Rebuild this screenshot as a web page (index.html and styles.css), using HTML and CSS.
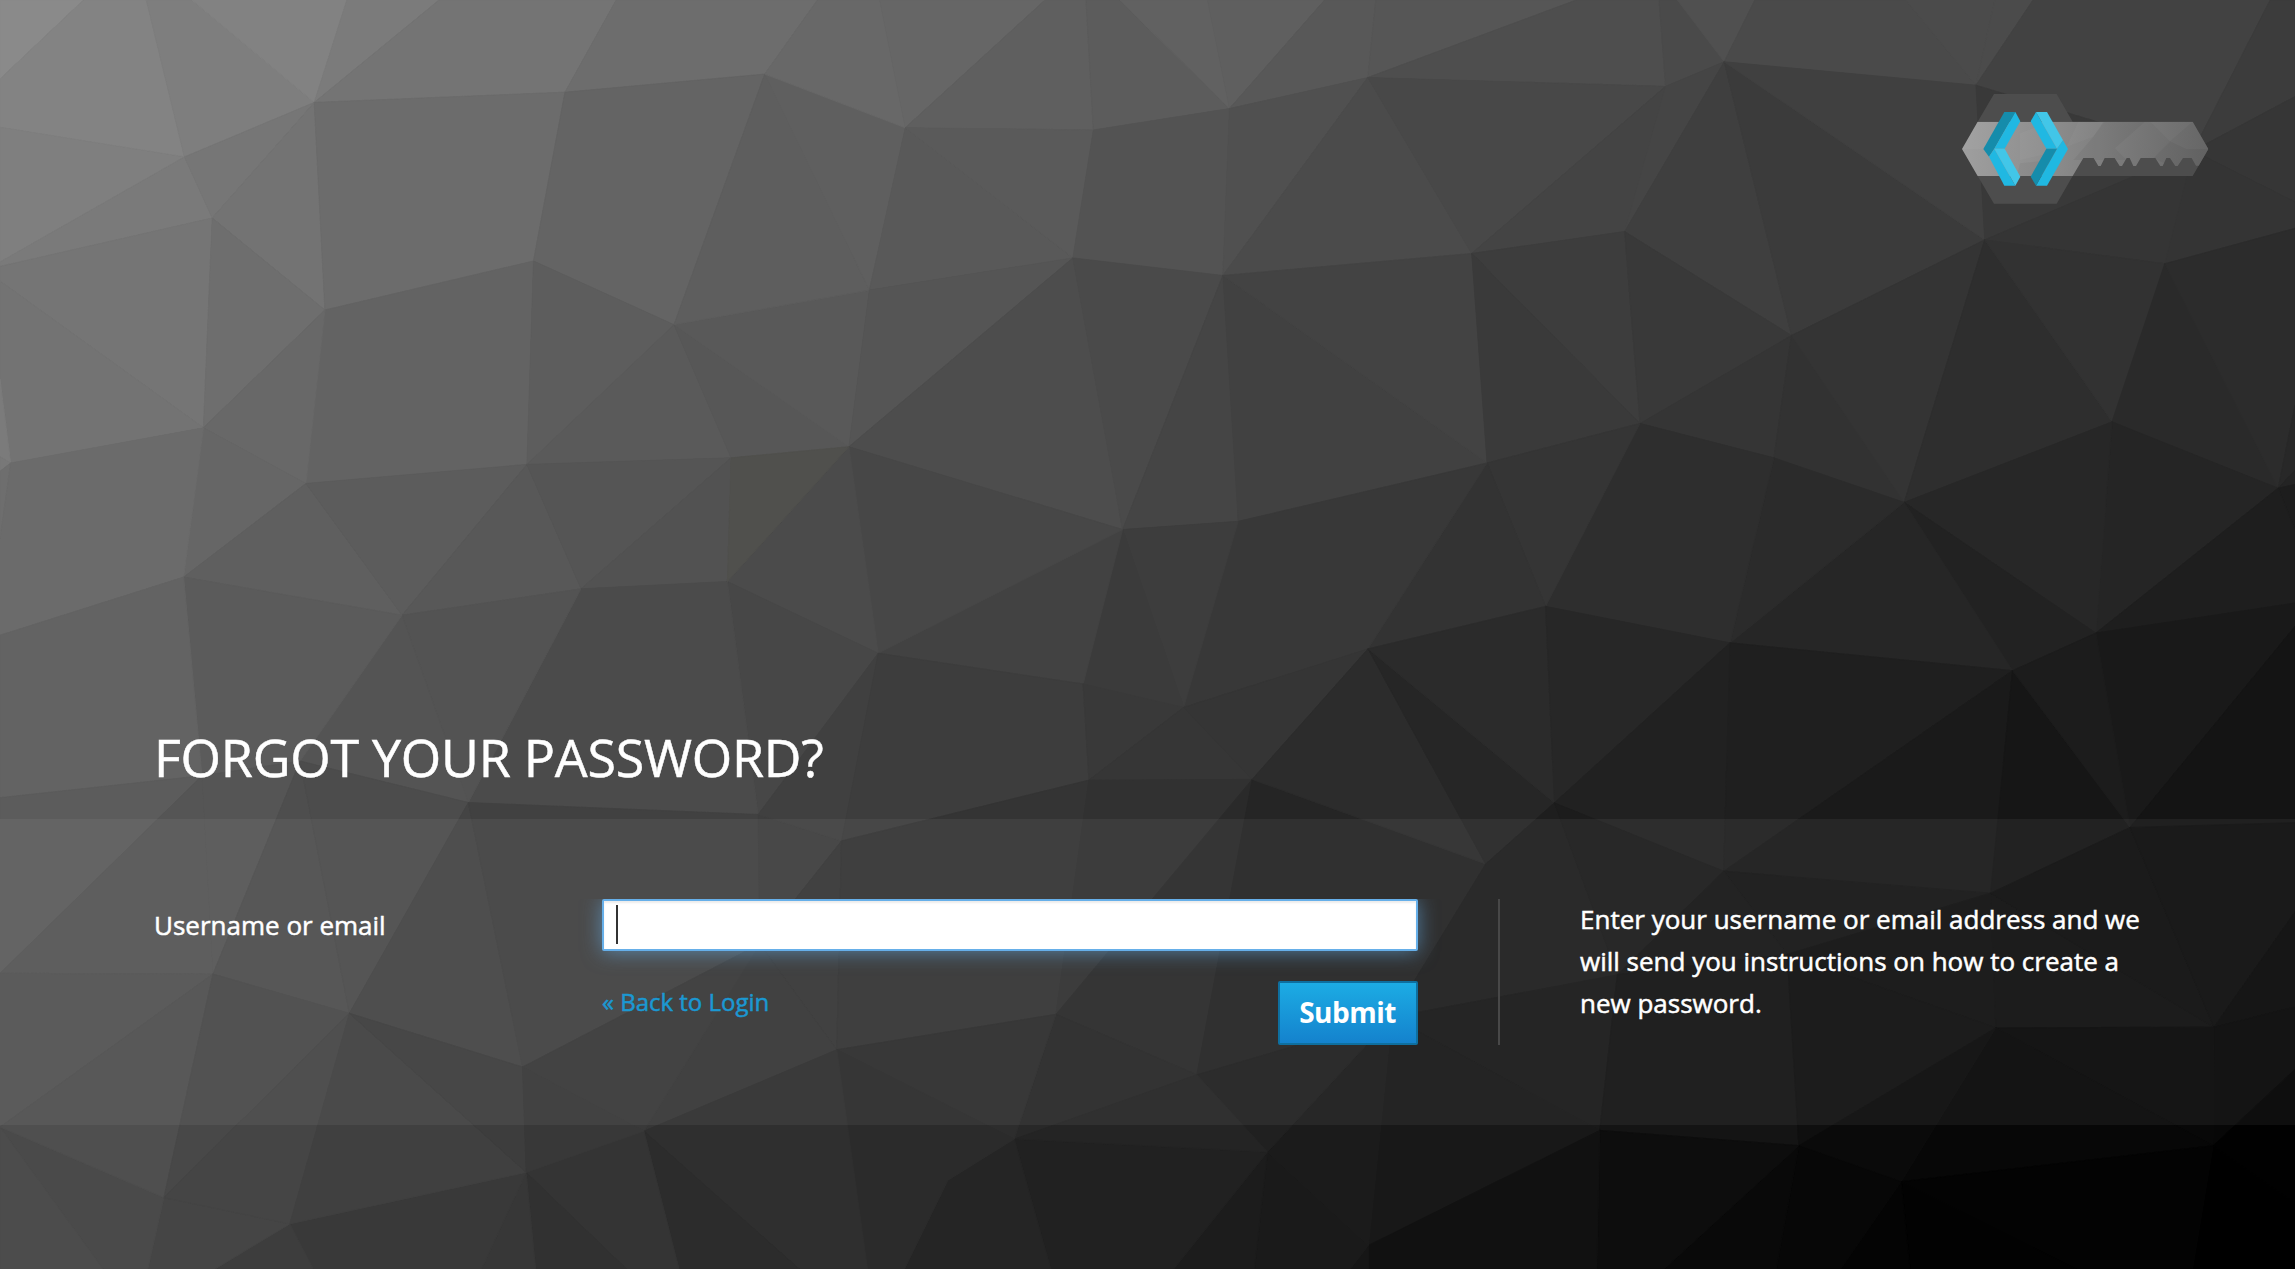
FILE: index.html
```html
<!DOCTYPE html>
<html lang="en">
<head>
<meta charset="utf-8">
<title>Forgot Your Password?</title>
<link rel="stylesheet" href="styles.css">
</head>
<body>
<svg class="backdrop" id="backdrop" viewBox="0 0 1568 867" preserveAspectRatio="none" aria-hidden="true"></svg>
<div class="page">
  <header class="brand">
    <svg class="logo" viewBox="60 36 750 342" role="img" aria-label="Keycloak">
      <path fill="#4d4d4d" d="M162 42H350L398 125H758L805 207L758 288H398L350 371H162L113 288L66 207L113 125Z"/>
      <clipPath id="blade"><path d="M113 125H758L805 207L776 257L768 257L755 234H729L713 258H706L690 234H679L668 258H661L646 234H602L588 258H580L569 234H560L546 258H539L524 234H494L482 258H475L461 234H430L398 288H113L66 207Z"/></clipPath>
      <linearGradient id="steel" x1="66" x2="805" y1="180" y2="230" gradientUnits="userSpaceOnUse"><stop offset="0" stop-color="#9f9f9f"/><stop offset=".35" stop-color="#8d8d8d"/><stop offset=".65" stop-color="#7a7a7a"/><stop offset="1" stop-color="#666"/></linearGradient>
      <g clip-path="url(#blade)">
        <path fill="url(#steel)" d="M66 120H810V290H66Z"/>
        <path fill="#fff" fill-opacity=".03" d="M66 207L113 125H170L150 207ZM240 160L330 125L380 207L240 240ZM415 125H495L460 170L380 200ZM690 184L630 125H758Z"/>
        <path fill="#000" fill-opacity=".04" d="M490 125H615L525 205L560 240H400L460 170ZM690 184L740 207L805 207L760 290L640 235ZM240 250L330 240L300 290H230Z"/>
      </g>
      <path fill="#158cab" d="M193 96H226L163 206L147 230L130 207Z"/>
      <path fill="#20b8e2" d="M226 96L241 124L194 206H163Z"/>
      <path fill="#20b8e2" d="M163 206L226 317H193L147 230Z"/>
      <path fill="#42c6e8" d="M163 206H194L241 290L226 317Z"/>
      <path fill="#20b8e2" d="M288 96L272 124L319 206H351Z"/>
      <path fill="#42c6e8" d="M288 96H321L369 181L351 206Z"/>
      <path fill="#20b8e2" d="M369 181L384 207L321 317H288L351 206Z"/>
      <path fill="#158cab" d="M319 206H351L288 317L272 290Z"/>
    </svg>
  </header>
  <h1 class="title">Forgot Your Password?</h1>
  <main class="panel">
    <form class="form">
      <label class="label" for="username">Username or email</label>
      <div class="fields">
        <div class="field"><div class="input" id="username" role="textbox" tabindex="0"><span class="caret"></span></div></div>
        <div class="actions">
          <a class="back" href="#">« Back to Login</a>
          <button class="submit" type="button">Submit</button>
        </div>
      </div>
    </form>
    <div class="info"><p class="info-text">Enter your username or email address and we will send you instructions on how to create a new password.</p></div>
  </main>
</div>
<script src="backdrop.js"></script>
</body>
</html>
```
FILE: styles.css
```css
* { box-sizing: border-box; }
html, body { height: 100%; }
body {
  margin: 0;
  background: #3c3c3c;
  color: #fff;
  font-family: "Open Sans", "Noto Sans", sans-serif;
  -webkit-text-stroke: .5px currentColor;
  overflow: hidden;
}
.backdrop {
  position: absolute;
  inset: 0;
  width: 100%;
  height: 100%;
}
.page {
  position: relative;
  height: 1269px;
  display: flex;
  flex-direction: column;
}
.brand {
  height: 721px;
  padding: 92px 85px 0 0;
  display: flex;
  justify-content: flex-end;
  align-items: flex-start;
}
.logo { width: 250px; height: 114px; }
.title {
  margin: 0;
  height: 98px;
  padding-left: 154px;
  font-size: 52px;
  font-weight: 400;
  line-height: 72px;
  letter-spacing: -.25px;
  text-transform: uppercase;
  white-space: nowrap;
}
.panel {
  height: 306px;
  padding: 80px 0 80px 154px;
  display: flex;
  background: rgba(255, 255, 255, .055);
}
.form {
  width: 1264px;
  display: flex;
}
.label {
  width: 448px;
  font-size: 26px;
  line-height: 36px;
  padding-top: 8px;
}
.fields { width: 816px; }
.field { clip-path: inset(0 -40px -40px -40px); }
.input {
  height: 52px;
  padding: 4px 12px;
  background: #fff;
  border: 2px solid #66afe9;
  border-radius: 2px;
  box-shadow: inset 0 2px 2px rgba(0, 0, 0, .075), 0 1px 20px rgba(102, 175, 233, .6);
}
.caret {
  display: block;
  width: 2px;
  height: 39px;
  background: #333;
}
.actions {
  margin-top: 30px;
  display: flex;
  justify-content: space-between;
  align-items: flex-start;
}
.back {
  padding-top: 4px;
  color: #1b98d2;
  font-size: 24px;
  line-height: 34px;
  text-decoration: none;
}
.submit {
  width: 140px;
  height: 64px;
  padding: 0 1px 2px 0;
  border: 2px solid #0e6f9f;
  border-radius: 2px;
  background: linear-gradient(#1cace4, #1482cd);
  color: #fff;
  font: 700 28px/40px "Open Sans", "Noto Sans", sans-serif;
  letter-spacing: -.5px;
  -webkit-text-stroke: 0;
}
.info {
  display: flow-root;
  width: 652px;
  height: 146px;
  margin-left: 80px;
  padding-left: 80px;
  border-left: 2px solid #484848;
}
.info-text {
  margin: -1px 0 0;
  font-size: 26px;
  line-height: 42px;
}
```
FILE: backdrop.js
```js
// Low-poly backdrop: named mesh points, then faces as "point point point shade".
const points = {
  tl:[0,0],tA:[57,0],tB:[100,0],tC:[131,0],tD:[237,0],tE:[300,0],tF:[421,0],tG:[558.5,0],tH:[601,0],tI:[714,0],tJ:[742,0],tK:[765,0],tL:[825,0],tM:[905,0],tN:[940,0],tO:[1077,0],tP:[1133.5,0],tQ:[1146,0],tR:[1199,0],tS:[1302,0],tT:[1363,0],tU:[1389,0],tV:[1551,0],tr:[1568,0],
  lA:[0,54],lB:[0,87],lC:[0,179],lC2:[0,182],lD:[0,192],lE:[0,259],lF:[0,312],lG:[0,322],lH:[0,368],lI:[0,434],lJ:[0,545],lK:[0,665],lL:[0,770],bl:[0,867],
  rA:[1568,66],rB:[1568,138],rC:[1568,156],rD:[1568,277],rE:[1568,321.5],rE2:[1568,331],rF:[1568,362],rG:[1568,412],rH:[1568,428],rI:[1568,562],rJ:[1568,623],rK:[1568,688],rL:[1568,730.6],rM:[1568,822],br:[1568,867],
  b4:[70.5,867],b5:[101,867],b6:[147,867],b7:[214,867],b8:[329,867],b9:[366,867],bA:[428,867],bB:[464,867],bC:[546,867],bD:[592.7,867],bE:[618,867],bF:[718,867],bG:[802,867],bH:[857,867],bI:[922.5,867],bJ:[935,867],bK:[1091,867],bL:[1137,867],bM:[1213.6,867],bN:[1257.6,867],bO:[1305,867],bP:[1418.7,867],bQ:[1498,867],
  A1:[126,107.2],A2:[214.7,70],A3:[145,149],A4:[386,63],A5:[222,211.8],A6:[364.5,178.3],A7:[460.5,221.8],A8:[139,292.3],A9:[7.3,316.3],A10:[209,330.3],A11:[360,317.3],A12:[499.5,312.8],A13:[125.5,394.3],A14:[274.7,420.3],A15:[397,402.3],A16:[497,397.3],A17:[522.5,50.6],
  B1:[618.5,87.3],B2:[747,88.8],B3:[840,74.2],B4:[934.5,53],B5:[594,198.2],B6:[733,176.2],B7:[835.5,188.2],B8:[1005.5,173.2],B9:[580,305.2],B10:[767,361.8],B11:[846,356.2],B12:[1016,316.3],
  C1:[1138,59],C2:[1178,42.2],C3:[1350,58.2],C4:[1110,158.2],C5:[1224,229.2],C6:[1356,163.9],C7:[1479,180.2],C8:[1498.5,103],C9:[1120.5,289.3],C10:[1212,312.8],C11:[1443,288.2],C12:[1301,343.2],C13:[1556.5,333.5],C14:[1056,414.3],D1:[1432,432.5],
  E1:[138,530],E2:[205,520],E3:[320,548.3],E4:[518,556.5],E5:[145.5,665.5],E6:[238.7,692.3],E7:[357,729],E8:[359.5,801],E9:[112,818.2],E10:[198,836.2],E11:[440,772.8],H1:[519,645],
  F1:[600,446.3],F2:[740,467.3],F3:[808.7,483.3],F4:[934.7,443.3],F5:[744,533],F6:[855.5,532.5],F7:[575,574.5],F8:[1015,590.3],F9:[721.5,693],F10:[571.7,717.2],F11:[817.7,734.3],F12:[693,778.2],F13:[647.7,806.3],F14:[866,787],F15:[935,850.8],F16:[951,695],
  G0:[1062,548.5],G1:[1182,439.2],G2:[1375,458.2],G3:[1177.7,595.2],G4:[1360,610.2],G5:[1455.3,565.3],G6:[1105,666],G7:[1221,652],G8:[1363.6,702.2],G9:[1512.6,701.8],G10:[1093,772.3],G11:[1229,782.7],G12:[1299,807.3],G13:[1512,782.8]
};
const faces = `
tl tA lA 8a|tA tB A1 lB lA 83|tB tC A2 A1 7e|tC tD A2 82|tD tE A2 7b|tE tF A4 A2 74|tF tG A17 A4 6d
lB A1 lC 7f|lC A1 A3 lC2 7a|A1 A2 A3 76|lC2 A3 A8 lD 75|lD A8 A9 lE 73|lE A9 lF 7b|lF A9 lG 78|lG A9 lH 6e
A2 A5 A3 73|A3 A5 A8 6e|A2 A4 A6 A5 6c|A4 A17 A7 A6 64|A5 A6 A11 A10 63|A5 A10 A8 68|A6 A7 A11 5d|A7 A12 A11 5a
A8 A10 A13 66|A9 A8 A13 lI lH 6b|A10 A14 A13 5f|A10 A11 A14 5c|A11 A15 A14 58|A11 A12 A15 55|A12 A16 A15 52
A7 B9 A12 57|A7 B5 B9 59|A17 B5 A7 5e|A17 B1 B5 5f|A17 tG tH B1 68|tH tI B1 66|tI tJ B2 B1 5f|tJ tK B3 B2 5c
tK tL B3 61|tL tM B3 5f|tM tN B4 B3 58|tN tO B4 56|B4 tO tP C1 4e|B1 B6 B5 59|B1 B2 B6 5a|B2 B3 B7 B6 53|B3 B4 B7 50
B4 B8 B7 4b|B4 C1 B8 48|B5 B6 B9 55|B6 B10 B9 4d|B6 B7 B10 4a|B7 B11 B10 45|B7 B12 B11 41|B7 B8 B12 43|B8 C1 C4 44
tP tQ C2 C1 4a|tQ tR C2 50|tR tS C3 C2 4a|tS tT C3 4b|tT tU C3 4b|tU tV C8 C3 42|tV tr rA C8 3c
C1 C2 C4 45|C2 C5 C4 3f|C2 C6 C5 3b|C2 C3 C6 40|C3 C8 C6 39|C8 rA rB 36|C8 rB rC C7 34|C6 C8 C7 35
B8 C4 C9 3d|B8 C9 B12 3a|C4 C5 C9 39|C5 C10 C9 35|C5 C12 C10 32|C5 C6 C12 34|C6 C11 C12 2e|C6 C7 C11 32|C7 C13 C11 2a
C7 rC rD C13 2c|C13 rD rE 28|C13 rE rE2 24|C13 rE2 rF 1d|C11 C13 D1 25|C12 C11 D1 27|C13 rF rG D1 1e|D1 rG rH G5 19
C12 D1 G2 22|C12 G2 G1 26|C10 C12 G1 2b|C9 C10 G1 C14 2e|B12 C9 C14 35|B12 C14 F4 33|B11 B12 F4 F3 38|B10 B11 F3 3d
B10 F3 F2 3b|B10 F2 F1 42|B9 B10 F1 47|B9 F1 A16 4b|A16 F1 E4 47|A15 A16 E4 E3 4b|A14 A15 E3 53|A14 E3 E2 54
A13 A14 E2 E1 5b|lI A13 E1 lJ 63|lJ E1 lK 5c|E1 E5 lK 55|lK E5 lL 52|E1 E2 E5 55|E2 E6 E5 4e|E2 E3 E6 4c|E3 E7 E6 44
E3 E4 H1 E7 41|E4 F7 H1 3e|H1 F7 F10 36|H1 F10 E11 36|E7 H1 E11 39|E4 F1 F7 40|F1 F2 F5 F7 3d|F2 F3 F5 39|F3 F6 F5 36
F3 F4 F6 35|F7 F5 F9 F10 34|F5 F6 F9 31|F6 F11 F9 2a|F6 F8 F16 F11 25|F4 F8 F6 2c|F4 G0 F8 26|F4 C14 G0 2b|C14 G1 G0 27
F8 G0 G6 F16 1e|F16 G6 G10 19|F16 G10 F15 18|G0 G1 G3 21|G0 G3 G6 1c|G1 G2 G3 1f|G2 G4 G3 1a|G2 G5 G4 16|G2 D1 G5 1c
G5 rH rI 14|G3 G4 G7 16|G3 G7 G6 17|G6 G7 G11 G10 14|G7 G4 G8 10|G7 G8 G11 0f|G4 G9 G8 0f|G4 G5 G9 0e|G5 rI rJ G9 0d
G9 rJ rK 09|G9 rK rL G13 07|G8 G9 G13 08|G8 G13 G12 07|G8 G12 G11 0a|G13 rL rM 01|G13 rM br bQ 00|G12 G13 bQ bP 03
G12 bP bO 02|G12 bO bN 04|G11 G12 bN bM 07|G11 bM bL 09|G10 G11 bL bK 0d|G10 bK bJ F15 11|F15 bJ bI 16|F14 F15 bI bH 1a
F14 F16 F15 1b|F11 F16 F14 20|F14 bH bG 1c|F12 F14 bG bF 21|F12 bF bE F13 25|F9 F11 F12 28|F11 F14 F12 24|F10 F9 F12 2d
F10 F12 F13 bE bD 2b|E11 F10 bD bC 2f|E11 bC bB 2c|E8 E11 bB bA 34|E8 bA b9 31|E8 b9 b8 37|E10 E8 b8 b7 39|E10 b7 b6 3d
E9 E10 b6 b5 45|lL E9 b5 b4 4a|lL b4 bl 4c|lL E5 E9 4f|E5 E6 E9 48|E6 E10 E9 45|E6 E8 E10 40|E6 E7 E8 3d|E7 E11 E8 38`;
const shapes = faces.trim().split(/[|\n]/).map(face => {
  const names = face.split(" ");
  const shade = names.pop();
  const d = "M" + names.map(n => points[n].join(" ")).join("L") + "Z";
  return [d, "#" + shade.repeat(3)];
});
shapes.push(["M499.5 312.8L580 305.2L497 397.3Z", "#50504d"]);
document.getElementById("backdrop").innerHTML = shapes
  .map(([d, color]) => `<path d="${d}" fill="${color}" stroke="${color}" stroke-width=".6" stroke-linejoin="bevel"/>`)
  .join("");
```
